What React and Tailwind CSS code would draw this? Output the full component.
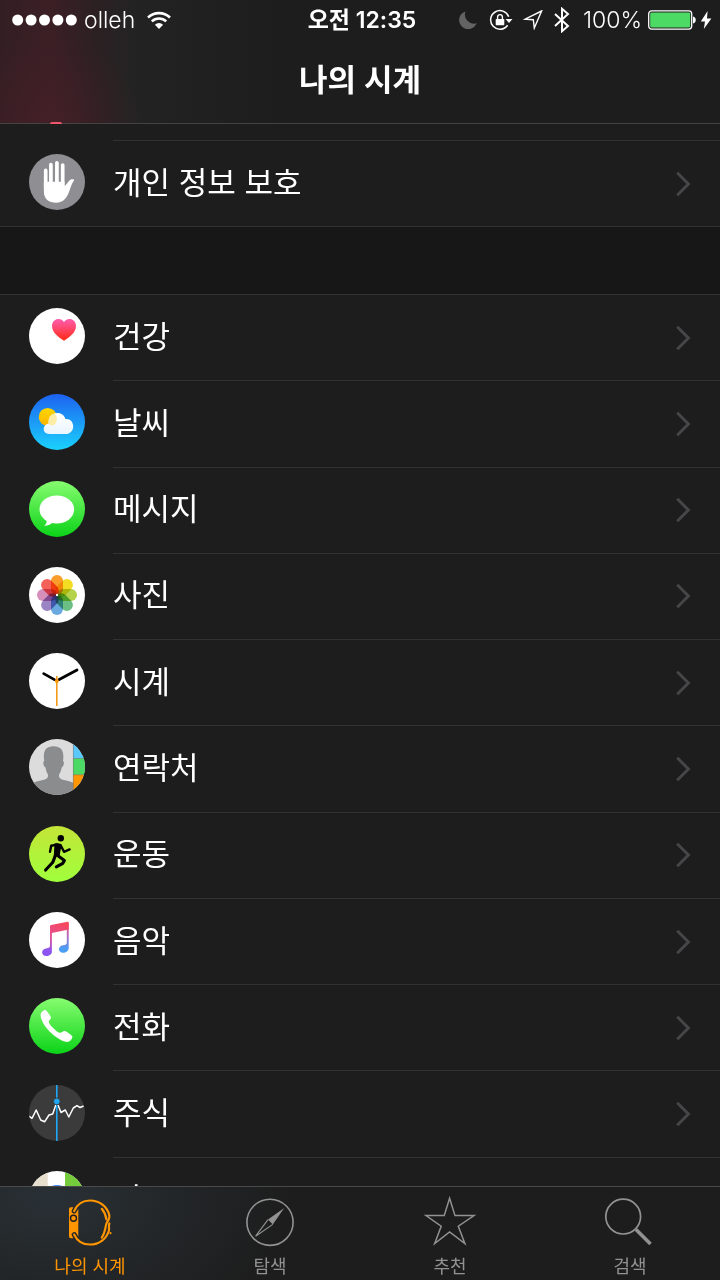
import React from 'react';

const Disc = ({ children, fill }) => (
    <svg viewBox="0 0 56 56" className="size-14 shrink-0 rounded-full" aria-hidden="true">
        <rect width="56" height="56" fill={fill} />
        {children}
    </svg>
);

const Gradient = ({ id, from, to }) => (
    <linearGradient id={id} x1="0" y1="0" x2="0" y2="1">
        <stop offset="0" stopColor={from} />
        <stop offset="1" stopColor={to} />
    </linearGradient>
);

const PrivacyIcon = () => (
    <Disc fill="#8e8e93">
        <path d="M16.7 16.4V34M21.9 10.5V34M27.9 8.8V34M33.7 11V34" stroke="#fff" strokeWidth="3.7" strokeLinecap="round" />
        <path d="M14.9 27.7V38C14.9 45 20 48.7 27 48.7C34.5 48.7 37.5 44 40 38C41.8 33.5 42.5 29.5 45 26.5C45.6 25 42 24.8 40.4 26.6L35.5 32.4V27.7Z" fill="#fff" />
    </Disc>
);

const HealthIcon = () => (
    <Disc fill="#fff">
        <defs><Gradient id="heart" from="#ff5db1" to="#ff2a12" /></defs>
        <path d="M35 32.7C29 29 23 24.3 23 18C23 10.6 31.8 8.6 35 14C38.2 8.6 47 10.6 47 18C47 24.3 41 29 35 32.7Z" fill="url(#heart)" />
    </Disc>
);

const WeatherIcon = () => (
    <Disc fill="url(#sky)">
        <defs>
            <Gradient id="sky" from="#1d62f0" to="#1ad2fd" />
            <Gradient id="sun" from="#ffd800" to="#ffb400" />
            <Gradient id="cloud" from="#ffffff" to="#eaf5fe" />
        </defs>
        <circle cx="18.7" cy="22.9" r="9" fill="url(#sun)" />
        <path d="M20.3 40C13 40 12.8 30.8 19.6 29.5C18.8 23 23 19 28.3 19C32.6 19 35.5 21.6 36.4 25C41 24.4 44.2 27.8 44.2 32.2C44.2 36.8 41 40 36.8 40Z" fill="url(#cloud)" />
        <path d="M19.6 29.5C19 24.6 21.5 20.6 25.4 19.4C28.4 22 28.6 26 26.4 29.4C24.6 31.6 21.5 32.3 19.6 29.5Z" fill="#ffe680" opacity=".7" />
    </Disc>
);

const MessagesIcon = () => (
    <Disc fill="url(#green)">
        <defs><Gradient id="green" from="#87fc70" to="#0bd318" /></defs>
        <ellipse cx="27.8" cy="28.5" rx="17.3" ry="14" fill="#fff" />
        <path d="M17 37.5C18.5 40.5 17.5 43 15.2 44.8C19 44.8 22 43 24.5 41Z" fill="#fff" />
    </Disc>
);

const petals = ['#fa9d2c', '#f3dc22', '#b5d24b', '#6cbf84', '#6aa9e0', '#9a84c4', '#d68fba', '#f4625a'];

const PhotosIcon = () => (
    <Disc fill="#fff">
        {petals.map((color, i) => (
            <rect key={color} x="22" y="8" width="12" height="20" rx="6" fill={color}
                transform={`rotate(${i * 45} 28 28)`} style={{ mixBlendMode: 'multiply' }} />
        ))}
        <circle cx="28" cy="28" r="1.2" fill="#fff" />
    </Disc>
);

const ClockIcon = () => (
    <Disc fill="#fff">
        <path d="M25.4 26.6L14.7 20.6M30.2 26.6L48 17" stroke="#000" strokeWidth="2.8" strokeLinecap="round" />
        <path d="M27.8 28L24 25.8M27.8 28L32 25.7" stroke="#000" strokeWidth="1.2" />
        <path d="M27.8 23V53" stroke="#f49b1a" strokeWidth="1.6" />
        <circle cx="27.8" cy="28" r="2" fill="#ff9500" />
    </Disc>
);

const ContactsIcon = () => (
    <Disc fill="#dcdcdc">
        <path d="M0 56V46C3 43.5 7 42.5 12 41.5C17.5 40.3 19.3 39.5 19 35.5C17.5 33.5 17 31 16.5 28.5C14.3 27.5 13.6 22.5 15.2 22C13.8 12 16.5 7.2 24.5 7.2C32.5 7.2 35.5 12 34 22C35.6 22.5 35 27.5 32.7 28.5C32.2 31 31.5 33.5 30 35.5C29.7 39.5 31.5 40.3 37 41.5C40.5 42.3 42.5 43 44.5 44V56Z" fill="#8b8c8e" />
        <rect x="44.2" width="12" height="19.5" fill="#5ac8fa" />
        <rect x="44.2" y="19.5" width="12" height="16.3" fill="#4cd964" />
        <rect x="44.2" y="35.8" width="12" height="21" fill="#ff9500" />
        <path d="M44.4 0V56M44.4 19.5H56M44.4 35.8H56" stroke="#555" strokeOpacity=".5" strokeWidth=".8" />
    </Disc>
);

const WorkoutIcon = () => (
    <Disc fill="url(#lime)">
        <defs><Gradient id="lime" from="#c4e538" to="#a0ff3c" /></defs>
        <circle cx="31.8" cy="12.3" r="3.2" />
        <path d="M25.5 17.6C28 16.8 31.5 17.2 32.2 19C32.8 21 31 25 31 28.2L30 30.5L24.8 29.5Z" />
        <g fill="none" stroke="#000" strokeLinecap="round" strokeLinejoin="round">
            <path d="M28 18.6L22.2 19.8L21 25.7M31.5 19L35 25.8L40.6 23.4" strokeWidth="2.4" />
            <path d="M28 29L35.4 34.4L33.8 37.3L27.3 40.8M26.4 29.4L23.8 36.3L16.6 44" strokeWidth="3.1" />
        </g>
    </Disc>
);

const MusicIcon = () => (
    <Disc fill="#fff">
        <defs>
            <linearGradient id="noteLeft" gradientUnits="userSpaceOnUse" x1="30" y1="10" x2="18" y2="44">
                <stop offset="0" stopColor="#f6485f" />
                <stop offset=".5" stopColor="#e0529a" />
                <stop offset=".85" stopColor="#8b55f2" />
            </linearGradient>
            <linearGradient id="noteRight" gradientUnits="userSpaceOnUse" x1="36" y1="10" x2="36" y2="41">
                <stop offset="0" stopColor="#f6485f" />
                <stop offset=".45" stopColor="#b56ac0" />
                <stop offset=".85" stopColor="#4c9df5" />
            </linearGradient>
        </defs>
        <path d="M37.8 11H39.7V36C39.7 39 37 40.8 34 40.8C28.5 40.6 28.8 34 33.8 33.3C36.6 32.9 37.8 32.6 37.8 30.5Z" fill="url(#noteRight)" />
        <path d="M21 14.2Q21 13.4 22 13.1L38.6 9.7Q39.7 9.5 39.7 10.6V17.4L22.9 21V39.5C22.9 42.4 20.3 44 17.4 44C11.7 43.8 11.9 37 17 36.4C19.9 36 21 35.7 21 33.5Z" fill="url(#noteLeft)" />
    </Disc>
);

const PhoneIcon = () => (
    <Disc fill="url(#green)">
        <path d="M11.6 17C11.6 14.2 14.8 11.7 16.4 12C17.6 12.4 21.4 17.8 22 19.2C22.5 20.8 19.4 22.6 19.8 24.2C21 27.6 27.4 33.6 30.6 34.8C32.2 35.2 34.2 32.6 35.7 33C37.5 33.5 42.7 37 43.3 38.2C44 40 41.4 43.8 38.4 44C29.5 43.6 12 28.5 11.6 17Z" fill="#fff" />
    </Disc>
);

const StocksIcon = () => (
    <Disc fill="#3b3b3c">
        <path d="M0 31L3 33.3L7.2 25L11.7 35L15.6 36.8L20 30L23.7 29L27 19.5L29 20L32 27.5L36.3 25L39.8 32L44.3 23L48 20.6L51 22.5L54.6 21" fill="none" stroke="#fff" strokeWidth="1.5" strokeLinejoin="round" />
        <path d="M27.8 0V56" stroke="#1fa8f5" strokeWidth="1.6" />
        <circle cx="27.8" cy="16.4" r="3.4" fill="#1fa8f5" stroke="#3b3b3c" />
    </Disc>
);

const MapsIcon = () => (
    <Disc fill="#fff">
        <rect width="18.7" height="56" fill="#e6dfce" />
        <rect x="36" width="20" height="56" fill="#76cb3c" />
        <circle cx="28" cy="28" r="14" fill="#3e82f7" />
    </Disc>
);

const apps = [
    { name: '건강', Icon: HealthIcon },
    { name: '날씨', Icon: WeatherIcon },
    { name: '메시지', Icon: MessagesIcon },
    { name: '사진', Icon: PhotosIcon },
    { name: '시계', Icon: ClockIcon },
    { name: '연락처', Icon: ContactsIcon },
    { name: '운동', Icon: WorkoutIcon },
    { name: '음악', Icon: MusicIcon },
    { name: '전화', Icon: PhoneIcon },
    { name: '주식', Icon: StocksIcon },
    { name: '지도', Icon: MapsIcon },
];

const Row = ({ name, Icon }) => (
    <a href="#" className="flex h-full items-stretch pl-[29px]">
        <span className="flex items-center pb-1"><Icon /></span>
        <span className="ml-7 flex flex-1 items-center justify-between border-b border-[#323232] pr-7 pb-0.5">
            <span className="text-[31px] leading-10">{name}</span>
            <svg viewBox="0 0 16 32" className="h-8 w-4" fill="none" stroke="#464648" strokeWidth="3" aria-hidden="true">
                <path d="M1.2 5.8L12.4 17L1.2 28.2" />
            </svg>
        </span>
    </a>
);

const StatusBar = () => (
    <div className="flex h-10 items-center pr-2 pl-3 text-[23px] leading-7">
        <div className="flex flex-1 items-center">
            <svg viewBox="0 0 66 12" className="h-3 w-[66px]" fill="#fff" aria-hidden="true">
                {[0, 1, 2, 3, 4].map((i) => <circle key={i} cx={5.7 + i * 13.4} cy="6" r="5.5" />)}
            </svg>
            <span className="ml-1.5 font-light">olleh</span>
            <svg viewBox="0 0 24 18" className="ml-3 h-[18px] w-6" aria-hidden="true">
                <path d="M1 6.5A16 16 0 0 1 23 6.5M4.8 10.4A10.5 10.5 0 0 1 19.2 10.4" fill="none" stroke="#fff" strokeWidth="2.6" />
                <path d="M12 18L7.9 13.7A6 6 0 0 1 16.1 13.7Z" fill="#fff" />
            </svg>
        </div>
        <time className="font-semibold">오전 12:35</time>
        <div className="flex flex-1 items-center justify-end">
            <svg viewBox="0 0 18 18" className="size-[18px]" aria-hidden="true">
                <path d="M6.5 .5A9 9 0 1 0 17.6 12.2A9 9 0 0 1 6.5 .5Z" fill="#636363" />
            </svg>
            <svg viewBox="0 0 24 22" className="ml-3 h-[22px] w-6" fill="none" stroke="#fff" aria-hidden="true">
                <path d="M19.7 7.8A9.3 9.3 0 1 0 18.6 16.2" strokeWidth="1.5" />
                <path d="M16.5 10H23.5L20 14Z" fill="#fff" stroke="none" />
                <rect x="6.7" y="10" width="8.6" height="6.2" rx=".8" fill="#fff" stroke="none" />
                <path d="M8.6 10.5V8A2.4 2.4 0 0 1 13.4 8V10.5" strokeWidth="1.4" />
            </svg>
            <svg viewBox="0 0 20 20" className="ml-2.5 size-5" fill="none" stroke="#fff" strokeWidth="1.4" aria-hidden="true">
                <path d="M18.6 1L2 9.2L10.3 9.7L11.3 18Z" />
            </svg>
            <svg viewBox="0 0 18 26" className="ml-2.5 h-[26px] w-[18px]" fill="none" stroke="#fff" strokeWidth="2" aria-hidden="true">
                <path d="M2 7L15 19L9 24.2V1.8L15 7L2 19" />
            </svg>
            <span className="ml-3 font-light">100%</span>
            <svg viewBox="0 0 48 20" className="ml-1.5 h-5 w-12" aria-hidden="true">
                <rect x=".7" y=".9" width="43" height="18.2" rx="3" fill="none" stroke="#fff" strokeWidth="1.3" />
                <rect x="2.2" y="2.6" width="40" height="14.8" rx="1.4" fill="#4cd964" />
                <path d="M45 6.5A3.6 3.6 0 0 1 45 13.5Z" fill="#fff" />
            </svg>
            <svg viewBox="0 0 12 20" className="ml-1 h-5 w-3" aria-hidden="true">
                <path d="M7.6 1L.8 11.4H5L3.8 19L11.4 8.4H7Z" fill="#fff" />
            </svg>
        </div>
    </div>
);

const WatchIcon = () => (
    <svg viewBox="0 0 48 48" className="size-12 overflow-visible" fill="none" aria-hidden="true">
        <path d="M3 11Q3 9.3 4.7 9.3H10.6Q12.3 9.3 12.3 11V38.6Q12.3 40.3 10.6 40.3H4.7Q3 40.3 3 38.6Z" fill="currentColor" />
        <g strokeLinecap="round">
            {/* dark rim that cuts the strap ends out of the case */}
            <path d="M8.2 13L10 9.8M8.2 36.6L10 39.8" stroke="#22272a" strokeWidth="5" />
            <g stroke="currentColor" strokeWidth="2.2">
                <path d="M8.2 13C11 6.4 17 2.5 24 2.5C33.5 2.5 40.5 8.5 43 16C44.2 19.6 42.8 22 41 24.3C39.8 26 39.8 28.5 39.2 31C38.4 35 37.4 37.5 35.8 39.6" />
                <path d="M8.2 36.6C11 42.8 17 46.5 24 46.5C33.5 46.5 40.6 40.4 42.8 33C43.6 30.2 42.2 27.6 43.4 25.4" />
                <path d="M35.8 10.8C38.3 13.8 39.8 17 40.4 21.4" />
            </g>
        </g>
        <circle cx="44.5" cy="35.2" r="1.1" fill="currentColor" />
        <circle cx="7.5" cy="20.2" r="3" stroke="#1d1d1d" strokeWidth="1.4" />
    </svg>
);

const CompassIcon = () => (
    <svg viewBox="0 0 48 48" className="size-12 overflow-visible" fill="none" stroke="currentColor" aria-hidden="true">
        <circle cx="24" cy="24.3" r="23.1" strokeWidth="1.6" />
        <path d="M38.2 10.1L22 21.6L26.8 26.4Z" fill="currentColor" stroke="none" />
        <path d="M22 21.6L9.6 38.2L26.8 26.4" strokeWidth="1.1" />
    </svg>
);

const StarIcon = () => (
    <svg viewBox="0 0 48 48" className="size-12 overflow-visible" fill="none" stroke="currentColor" strokeWidth="1.5" aria-hidden="true">
        <path d="M23.6 .3L29 17.6H48L32.3 28.2L38.9 45.6L23.6 34L8.7 45.6L15.2 28.2L0 17.6H18.2Z" />
    </svg>
);

const SearchIcon = () => (
    <svg viewBox="0 0 48 48" className="size-12 overflow-visible" fill="none" stroke="currentColor" aria-hidden="true">
        <circle cx="17.2" cy="18.6" r="17.4" strokeWidth="1.7" />
        <path d="M30 31.5L44.5 46" strokeWidth="3.6" />
    </svg>
);

const tabs = [
    { name: '나의 시계', Icon: WatchIcon, active: true },
    { name: '탐색', Icon: CompassIcon },
    { name: '추천', Icon: StarIcon },
    { name: '검색', Icon: SearchIcon },
];

export default function App() {
    return (
        <div className="flex h-screen flex-col overflow-hidden bg-[#1d1d1d] font-[Inter,'Noto_Sans_CJK_KR',sans-serif] text-white">
            <header className="relative h-[124px] shrink-0 border-b border-[#434343] bg-[radial-gradient(ellipse_90px_90px_at_50px_124px,#4a1f2899,#3c1f2500),linear-gradient(90deg,#331f23,#3b1f25_50px,#2c2023_95px,#242323_130px,#1d1d1d_280px)]">
                <StatusBar />
                <h1 className="pt-5 text-center text-[31px] leading-10 font-semibold">나의 시계</h1>
                {/* bottom edge of the icon scrolled under the header */}
                <span className="absolute -bottom-px left-[50px] h-0.5 w-3 rounded-t-full bg-[#f0566a]" />
            </header>

            <main className="min-h-0 flex-1 overflow-hidden">
                <ul className="border-b border-[#323232]">
                    <li className="ml-[113px] h-[17px] border-b border-[#323232]" />
                    <li className="-mb-px h-[86px]"><Row name="개인 정보 보호" Icon={PrivacyIcon} /></li>
                </ul>
                <div className="h-[67px] bg-[#171717]" />
                <ul className="grid min-h-[950px] auto-rows-fr border-t border-[#323232]">
                    {apps.map((app) => <li key={app.name}><Row {...app} /></li>)}
                </ul>
            </main>

            <nav className="grid h-[94px] shrink-0 grid-cols-4 border-t border-[#4a4a4a] bg-[radial-gradient(ellipse_240px_150px_at_50px_10px,#293035,#1d1d1d00)]">
                {tabs.map(({ name, Icon, active }) => (
                    <a key={name} href="#" className={`flex flex-col items-center gap-[9px] pt-[11px] ${active ? 'text-[#ff9500]' : 'text-[#929292]'}`}>
                        <Icon />
                        <span className="text-lg leading-6">{name}</span>
                    </a>
                ))}
            </nav>
        </div>
    );
}
